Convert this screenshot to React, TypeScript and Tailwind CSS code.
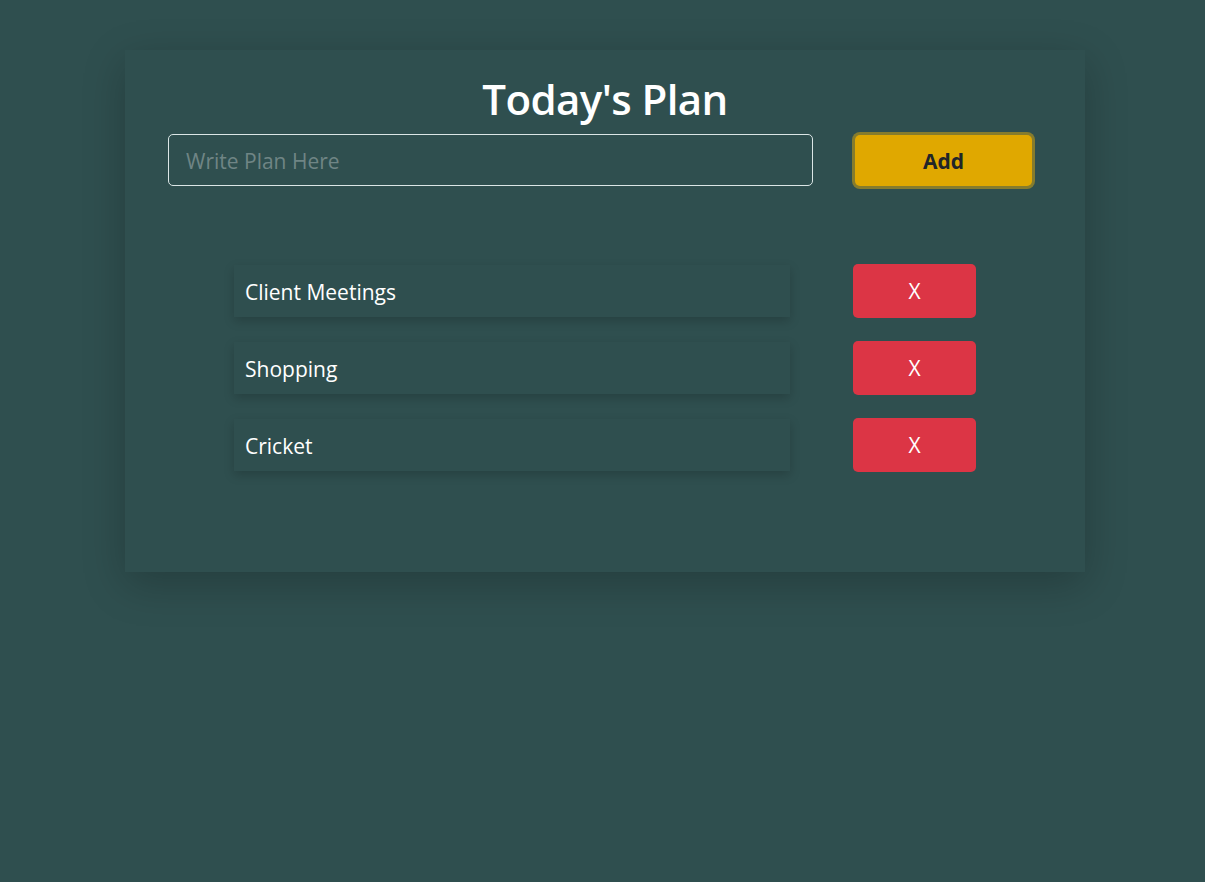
import { useState } from 'react'

type Plan = { id: number; text: string }

export default function App() {
  const [text, setText] = useState('')
  const [plans, setPlans] = useState<Plan[]>([
    { id: 1, text: 'Client Meetings' },
    { id: 2, text: 'Shopping' },
    { id: 3, text: 'Cricket' },
  ])

  function addPlan() {
    if (!text.trim()) return
    setPlans([...plans, { id: Date.now(), text }])
    setText('')
  }

  function removePlan(id: number) {
    setPlans(plans.filter((plan) => plan.id !== id))
  }

  return (
    <div className="min-h-[882px] bg-[#2f4f4f] pt-[50px] pl-[125px] font-['Open_Sans',sans-serif]">
      <div className="w-[960px] h-[522px] bg-[#2f4f4f] shadow-[0_12px_40px_rgba(0,0,0,0.22)] pt-[21px]">
        <h1 className="text-center text-[42px] leading-[56px] font-semibold text-white tracking-[-0.6px]">
          Today's Plan
        </h1>
        <div className="flex items-center mt-[7px] pl-[43px]">
          <input
            value={text}
            onChange={(e) => setText(e.target.value)}
            placeholder="Write Plan Here"
            className="w-[645px] h-[52px] rounded-[5px] border border-[#dbe6e6] bg-transparent px-[17px] pt-[2px] text-[21px] text-white placeholder:text-[#6f8585] outline-none"
          />
          <button
            onClick={addPlan}
            className="ml-[42px] w-[177px] h-[51px] rounded-[5px] bg-[#e0a800] pt-[3px] text-[21px] font-bold text-[#212529] shadow-[0_0_0_3px_rgba(222,170,12,0.5)]"
          >
            Add
          </button>
        </div>
        <ul className="mt-[78px] flex flex-col gap-[23px]">
          {plans.map((plan) => (
            <li key={plan.id} className="flex items-center">
              <div className="ml-[109px] w-[556px] h-[52px] flex items-center px-[11px] pt-[3px] text-[21px] text-white shadow-[0_4px_10px_rgba(0,0,0,0.18)]">
                {plan.text}
              </div>
              <button
                onClick={() => removePlan(plan.id)}
                className="ml-[63px] w-[123px] h-[54px] rounded-[5px] bg-[#dc3545] pt-[2px] text-[21px] text-white"
              >
                X
              </button>
            </li>
          ))}
        </ul>
      </div>
    </div>
  )
}
